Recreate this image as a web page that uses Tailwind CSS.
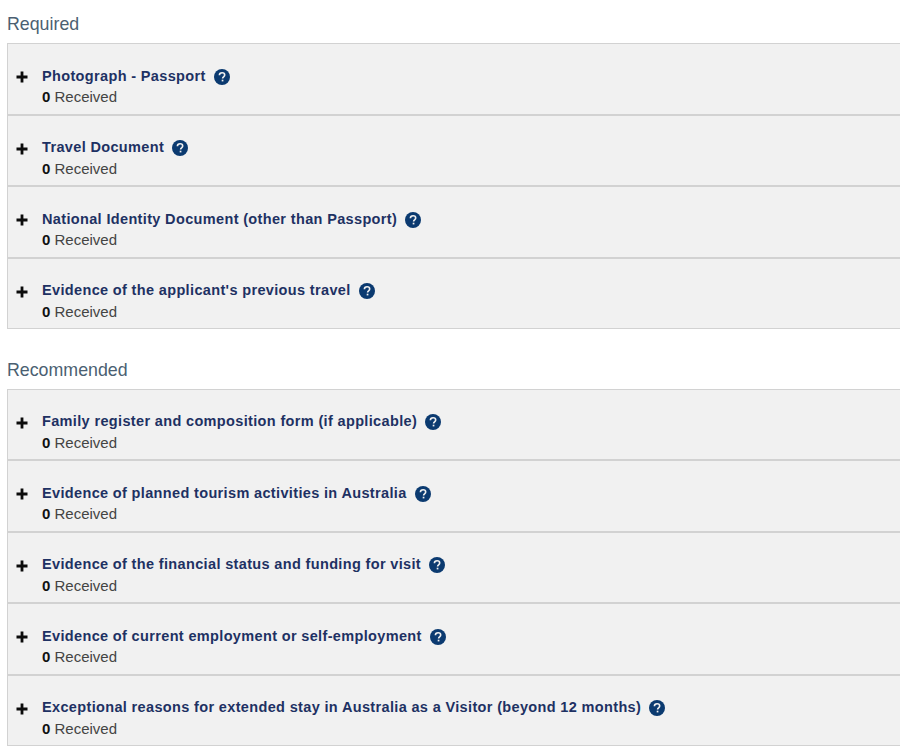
<!DOCTYPE html>
<html lang="en">
<head>
  <meta charset="UTF-8">
  <title>Documents</title>
  <script src="https://cdn.jsdelivr.net/npm/@tailwindcss/browser@4"></script>
</head>
<body class="bg-white font-['Liberation_Sans',sans-serif] overflow-hidden">
  <div class="h-[750px] overflow-hidden pl-[7px] pt-[14px]">
    <h2 class="text-[17.8px] leading-[20px] h-[29px] text-[#4b5f72]">Required</h2>
    <div id="required" class="border border-r-0 border-[#d2d2d2] bg-[#f1f1f1]"></div>
    <h2 class="text-[17.8px] leading-[20px] h-[29px] mt-[30.5px] text-[#4b5f72]">Recommended</h2>
    <div id="recommended" class="border border-r-0 border-[#d2d2d2] bg-[#f1f1f1]"></div>
  </div>

  <script>
    const required = [
      "Photograph - Passport",
      "Travel Document",
      "National Identity Document (other than Passport)",
      "Evidence of the applicant's previous travel"
    ];
    const recommended = [
      "Family register and composition form (if applicable)",
      "Evidence of planned tourism activities in Australia",
      "Evidence of the financial status and funding for visit",
      "Evidence of current employment or self-employment",
      "Exceptional reasons for extended stay in Australia as a Visitor (beyond 12 months)"
    ];

    function rows(items) {
      return items.map((name, i) => `
        <div class="${i < items.length - 1 ? "h-[71.5px] border-b-2 border-[#d2d2d2]" : "h-[69.5px]"} flex items-start pt-[22.75px]">
          <svg class="w-[12px] h-[12px] ml-[8px] mr-[14px] mt-[4.25px] shrink-0" viewBox="0 0 12 12"><path d="M4.6 0.5h2.8v4.1h4.1v2.8H7.4v4.1H4.6V7.4H0.5V4.6h4.1z" fill="#0b0b0b"/></svg>
          <div>
            <div class="flex items-center h-[19.5px] gap-[8px] text-[14.5px] font-bold tracking-[0.35px] text-[#1e3163]">
              <span>${name}</span>
              <svg class="w-[16px] h-[16px] shrink-0" viewBox="0 0 16 16">
                <circle cx="8" cy="8" r="8" fill="#0b3a70"/>
                <path d="M5.4 6.2c0-1.5 1.1-2.4 2.7-2.4s2.6.9 2.6 2.1c0 1.9-2.1 1.8-2.1 3.5" fill="none" stroke="#f0f0f0" stroke-width="1.6"/>
                <rect x="7.7" y="10.7" width="1.7" height="1.7" fill="#f0f0f0"/>
              </svg>
            </div>
            <div class="text-[15px] leading-[21px] text-[#444]"><b class="text-[#111]">0</b> Received</div>
          </div>
        </div>`).join("");
    }

    document.getElementById("required").innerHTML = rows(required);
    document.getElementById("recommended").innerHTML = rows(recommended);
  </script>
</body>
</html>
